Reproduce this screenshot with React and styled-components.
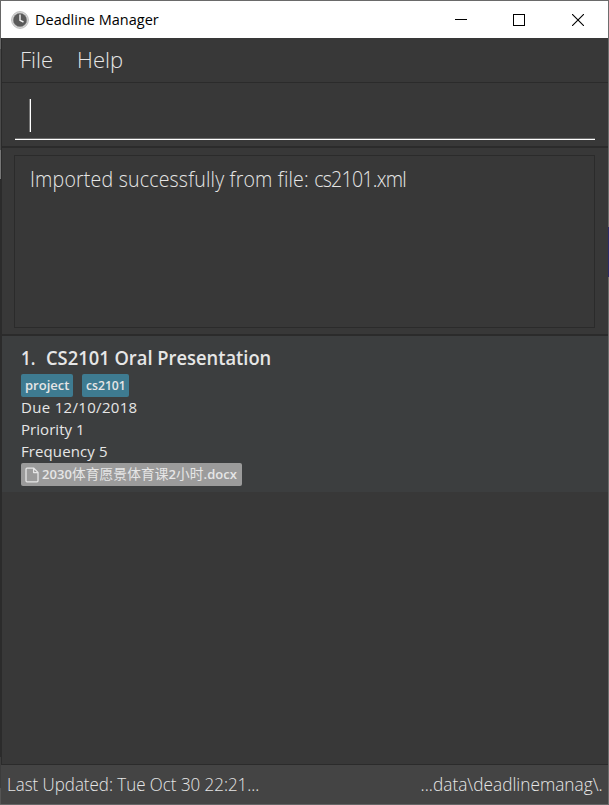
import React from "react";
import styled, { createGlobalStyle } from "styled-components";

const Global = createGlobalStyle`
  * { box-sizing: border-box; }
  body { margin: 0; background: #383838; font-family: "Open Sans", "Noto Sans", "Noto Sans CJK SC", sans-serif; }
`;

const Window = styled.div`
  width: 609px;
  height: 805px;
  display: flex;
  flex-direction: column;
  overflow: hidden;
  padding: 1px;
  background:
    linear-gradient(#6a6a6a, #6a6a6a) 0 0 / 100% 1px no-repeat,
    linear-gradient(#666, #666) 0 100% / 100% 1px no-repeat,
    linear-gradient(#666 49px, #4a4a4a 49px 150px, #777 150px 179px, #2b2b2b 179px 757px, #3c3c3c 757px 788px, #555 788px) 0 0 / 1px 100% no-repeat,
    linear-gradient(#6e6e6e 227px, #2c2c68 227px 277px, #6e6e6e 277px) 100% 0 / 1px 100% no-repeat,
    #383838;
`;

const TitleBar = styled.header`
  height: 37px;
  flex: none;
  display: flex;
  align-items: center;
  background: #fff;
  padding-left: 10px;
`;

const Label = styled.span`
  display: block;
  white-space: pre;
  font-size: ${(p) => p.$size}px;
  font-weight: ${(p) => p.$weight || 400};
  letter-spacing: ${(p) => p.$spacing || 0}px;
  line-height: ${(p) => p.$line || 22}px;
  color: ${(p) => p.$color || "#e6e6e6"};
  transform: ${(p) => (p.$condense ? `scaleX(${p.$condense})` : "none")};
  transform-origin: ${(p) => p.$origin || "left"} center;
`;

const FileName = styled.span`
  letter-spacing: -0.85px;
`;

const Cjk = styled.span`
  font-family: "Noto Sans CJK SC", sans-serif;
  font-weight: 400;
  font-size: 13.7px;
  line-height: 1;
`;

const AppName = styled.div`
  flex: 1;
  padding: 0 0 2px 6px;
`;

const WindowButton = styled.div`
  width: ${(p) => p.$width || 58}px;
  height: 35px;
  display: flex;
  align-items: center;
  justify-content: center;
`;

const MenuBar = styled.nav`
  height: 45px;
  flex: none;
  display: flex;
  gap: 24px;
  padding: 6px 0 0 18px;
  border-left: 1px solid #2b2b2b;
  border-bottom: 1px solid #2b2b2b;
`;

const CommandPane = styled.section`
  height: 65px;
  flex: none;
  padding: 13px 13px 0;
  border-left: 1px solid #2b2b2b;
  border-bottom: 2px solid #2b2b2b;
`;

const CommandField = styled.div`
  height: 44px;
  padding: 3px 0 0 14px;
  border-bottom: 1px solid #fff;
  box-shadow: inset 0 -1px #6c6c6c;
`;

const Caret = styled.div`
  width: 2px;
  height: 33px;
  border-left: 1px solid #777;
  border-right: 1px solid #fff;
`;

const ResultPane = styled.section`
  height: 188px;
  flex: none;
  padding: 7px 13px 6px 12px;
  border-left: 1px solid #2b2b2b;
  border-bottom: 2px solid #2b2b2b;
`;

const ResultBox = styled.div`
  height: 173px;
  padding: 7px 15px;
  border: 1px solid #2b2b2b;
`;

const List = styled.main`
  flex: 1;
  border-left: 1px solid #2b2b2b;
`;

const Card = styled.article`
  height: 156px;
  padding: 9px 0 0 19px;
  background: #3c3e3f;
`;

const TitleRow = styled.div`
  height: 29px;
  display: flex;
`;

const Index = styled.div`
  width: 25px;
`;

const Tags = styled.div`
  display: flex;
  gap: 9px;
  height: 23px;
`;

const Tag = styled.span`
  width: ${(p) => p.$width}px;
  height: 23px;
  padding-left: 4px;
  border-radius: 2px;
  background: #3e7b91;
`;

const Details = styled.div`
  height: 66px;
  margin-top: -1px;
  margin-bottom: 1px;
`;

const Attachment = styled.div`
  width: 221px;
  height: 23px;
  display: flex;
  align-items: flex-start;
  gap: 3px;
  padding-left: 4px;
  border-radius: 2px;
  background: #9b9b9b;
`;

const FileGlyph = styled.svg`
  margin-top: 4px;
`;

const Footer = styled.footer`
  height: 40px;
  flex: none;
  display: flex;
  justify-content: space-between;
  padding: 6px 5px 0 6px;
  background: #444;
  border-top: 1px solid #2b2b2b;
`;

function ClockIcon() {
  return (
    <svg width="18" height="18" viewBox="0 0 18 18">
      <circle cx="9" cy="9" r="8.4" fill="#dedede" stroke="#b4b4b4" strokeWidth=".9" />
      <circle cx="9" cy="9" r="6.8" fill="#5a5a5a" stroke="#888" strokeWidth=".5" />
      <path d="M9 3.5V9.3L12.5 11" fill="none" stroke="#f4f4f4" strokeWidth="1.4" />
    </svg>
  );
}

function FileIcon() {
  return (
    <FileGlyph width="14" height="16" viewBox="0 0 14 16">
      <path
        d="M2 1.2H8.8L13 5.4V13.8Q13 14.8 12 14.8H2Q1 14.8 1 13.8V2.2Q1 1.2 2 1.2ZM8.6 1.4V5.6H12.8"
        fill="none"
        stroke="#e6e6e6"
        strokeWidth="1.3"
        strokeLinejoin="round"
      />
    </FileGlyph>
  );
}

export default function App() {
  return (
    <>
      <Global />
      <Window>
        <TitleBar>
          <ClockIcon />
          <AppName>
            <Label $size={15} $color="#000" $condense={0.967} $line={20}>Deadline Manager</Label>
          </AppName>
          <WindowButton>
            <svg width="12" height="12" shapeRendering="crispEdges"><path d="M0 5.5H12" stroke="#000" /></svg>
          </WindowButton>
          <WindowButton>
            <svg width="12" height="12" shapeRendering="crispEdges"><path d="M.5 .5H11.5V11.5H.5Z" fill="none" stroke="#000" /></svg>
          </WindowButton>
          <WindowButton $width={60}>
            <svg width="12" height="12"><path d="M0 0L12 12M12 0L0 12" stroke="#000" strokeWidth="1.1" /></svg>
          </WindowButton>
        </TitleBar>
        <MenuBar>
          <Label $size={22} $weight={300} $line={30}>File</Label>
          <Label $size={22} $weight={300} $line={30}>Help</Label>
        </MenuBar>
        <CommandPane>
          <CommandField><Caret /></CommandField>
        </CommandPane>
        <ResultPane>
          <ResultBox>
            <Label $size={22} $weight={300} $line={30} $condense={0.89} $spacing={0.2}>
              Imported successfully from file: <FileName>cs2101.xml</FileName>
            </Label>
          </ResultBox>
        </ResultPane>
        <List>
          <Card>
            <TitleRow>
              <Index><Label $size={19} $weight={600} $line={26} $condense={0.9}>1.</Label></Index>
              <Label $size={19} $weight={600} $line={26} $condense={0.965}>CS2101 Oral Presentation</Label>
            </TitleRow>
            <Tags>
              <Tag $width={52}><Label $size={13} $weight={600}>project</Label></Tag>
              <Tag $width={47}><Label $size={13} $weight={600} $condense={0.935}>cs2101</Label></Tag>
            </Tags>
            <Details>
              <Label $size={15} $spacing={0.32}>Due 12/10/2018</Label>
              <Label $size={15} $spacing={0.05}>Priority 1</Label>
              <Label $size={15} $spacing={0.1}>Frequency 5</Label>
            </Details>
            <Attachment>
              <FileIcon />
              <Label $size={13} $weight={600} $spacing={0.08}>
                2030<Cjk>体育愿景体育课</Cjk>2<Cjk>小时</Cjk>.docx
              </Label>
            </Attachment>
          </Card>
        </List>
        <Footer>
          <Label $size={18} $weight={300} $line={26} $condense={0.94}>Last Updated: Tue Oct 30 22:21...</Label>
          <Label $size={18} $weight={300} $line={26} $condense={0.96} $origin="right">...data\deadlinemanag\.</Label>
        </Footer>
      </Window>
    </>
  );
}
